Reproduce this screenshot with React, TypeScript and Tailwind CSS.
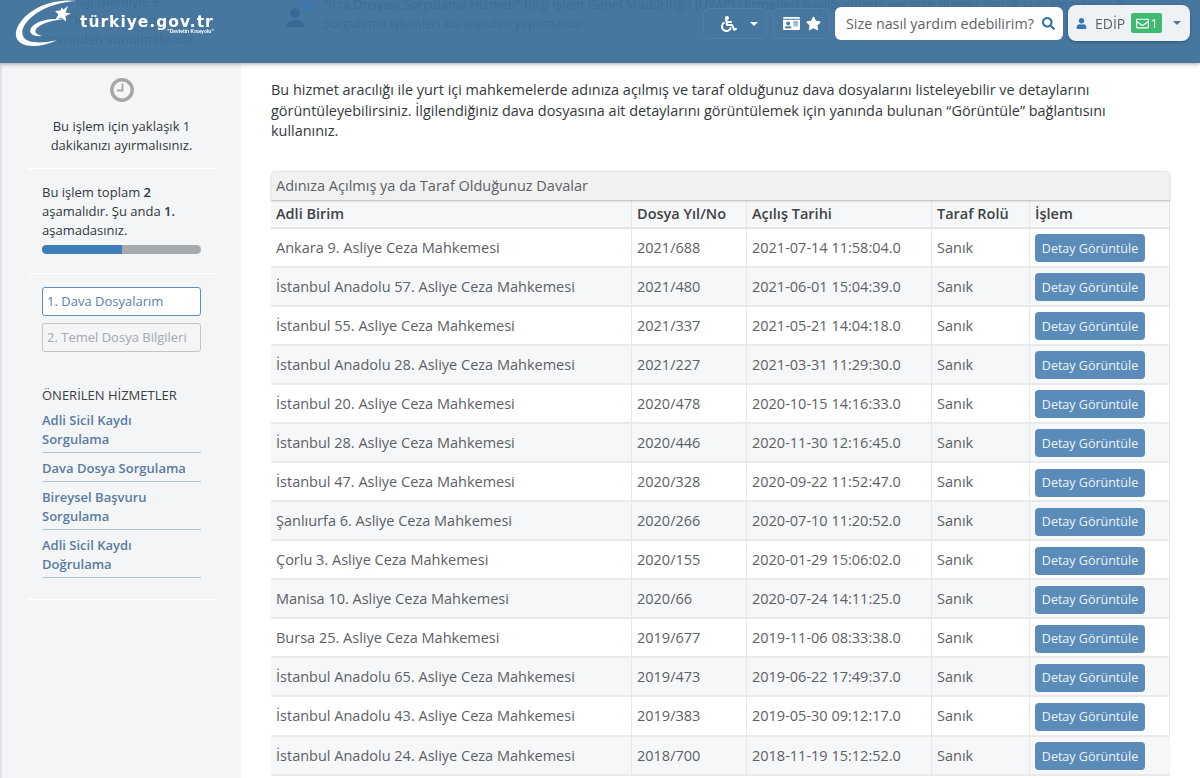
import { FaIdCard, FaRegEnvelope, FaSearch, FaStar, FaUser, FaWheelchair } from "react-icons/fa";

const rows = [
  ["Ankara 9. Asliye Ceza Mahkemesi", "2021/688", "2021-07-14 11:58:04.0"],
  ["İstanbul Anadolu 57. Asliye Ceza Mahkemesi", "2021/480", "2021-06-01 15:04:39.0"],
  ["İstanbul 55. Asliye Ceza Mahkemesi", "2021/337", "2021-05-21 14:04:18.0"],
  ["İstanbul Anadolu 28. Asliye Ceza Mahkemesi", "2021/227", "2021-03-31 11:29:30.0"],
  ["İstanbul 20. Asliye Ceza Mahkemesi", "2020/478", "2020-10-15 14:16:33.0"],
  ["İstanbul 28. Asliye Ceza Mahkemesi", "2020/446", "2020-11-30 12:16:45.0"],
  ["İstanbul 47. Asliye Ceza Mahkemesi", "2020/328", "2020-09-22 11:52:47.0"],
  ["Şanlıurfa 6. Asliye Ceza Mahkemesi", "2020/266", "2020-07-10 11:20:52.0"],
  ["Çorlu 3. Asliye Ceza Mahkemesi", "2020/155", "2020-01-29 15:06:02.0"],
  ["Manisa 10. Asliye Ceza Mahkemesi", "2020/66", "2020-07-24 14:11:25.0"],
  ["Bursa 25. Asliye Ceza Mahkemesi", "2019/677", "2019-11-06 08:33:38.0"],
  ["İstanbul Anadolu 65. Asliye Ceza Mahkemesi", "2019/473", "2019-06-22 17:49:37.0"],
  ["İstanbul Anadolu 43. Asliye Ceza Mahkemesi", "2019/383", "2019-05-30 09:12:17.0"],
  ["İstanbul Anadolu 24. Asliye Ceza Mahkemesi", "2018/700", "2018-11-19 15:12:52.0"],
];

const links = [
  ["Adli Sicil Kaydı", "Sorgulama"],
  ["Dava Dosya Sorgulama"],
  ["Bireysel Başvuru", "Sorgulama"],
  ["Adli Sicil Kaydı", "Doğrulama"],
];

function Logo() {
  return (
    <div className="flex items-start">
      <svg width="65" height="48" viewBox="0 0 65 48" className="shrink-0">
        <path d="M62 1C42-2 14 6 3 26c-6 12 1 20 15 20 8 0 16-2 24-6-8 2-16 3-23 2C8 41 5 34 9 26 18 11 40 2 62 1Z" fill="#fff" />
        <path d="M50 19c-16-1-29 2-34 9-3 5 2 9 11 8-7-2-8-5-5-8 5-5 16-8 28-9Z" fill="#fff" />
        <path d="m53 6-2.500 6.500 5.500 1-5.500 2.500.5 5.500-4.500-4-6 2 3-5-3.500-3.500 5.500-.5 1-3 2 2Z" fill="#fff" />
      </svg>
      <div className="mt-[15px] flex flex-col items-end">
        <span className="font-['DejaVu_Sans'] text-[15.5px] leading-[14px] font-bold tracking-[1px] text-white">türkiye.gov.tr</span>
        <span className="font-['Liberation_Sans'] text-[5px] leading-[5px] font-bold text-white">"Devletin Kısayolu"</span>
      </div>
    </div>
  );
}

function Header() {
  return (
    <header className="fixed top-0 left-0 z-10 flex h-[63px] w-full items-start bg-[#47769f] pl-[15px] shadow-[0_1px_4px_rgba(0,0,0,0.35)]">
      <div className="pointer-events-none absolute top-[-8px] left-[40px] w-[160px] text-center text-[13px] leading-[19px] text-[#3f6d95]">
        İlgi işlemiyle e-<br />Devlet üzerinden<br />üzerinden sunulmaktadır.
      </div>
      <div className="pointer-events-none absolute top-[-5px] left-[323px] w-[800px] text-[12.8px] leading-[19px] whitespace-nowrap text-[#3f6d95]">
        "İcra Dosyası Sorgulama Hizmeti" Bilgi İşlem Genel Müdürlüğü (UYAP) Hizmetleri başlığı altında yer alan hizmet olarak sunulmaktadır. Bu<br />
        Sorgulama işlemleri bu alandan yapılmalıdır.
      </div>
      <svg className="absolute top-0 left-[284px]" width="36" height="30" viewBox="0 0 36 30">
        <circle cx="11" cy="13" r="5" fill="#3a6892" />
        <path d="M2 27c0-5 4-7 9-7s9 2 9 7Z" fill="#3a6892" />
        <circle cx="25" cy="5" r="7" fill="#3f78ac" />
        <path d="M18 10l-2 4 5-2Z" fill="#3f78ac" />
        <path d="M24 1h2v5h-2Zm0 6h2v2h-2Z" fill="#47769f" />
      </svg>
      <div className="relative z-10"><Logo /></div>
      <div className="relative z-10 ml-auto flex items-start pt-[5px] pr-[10px]">
        <div className="mt-[3px] mr-[6px] flex h-[31px] w-[64px] items-center gap-[13px] rounded-md border border-[#4f7ea6] pl-[17px] text-white">
          <FaWheelchair size={16} />
          <div className="h-0 w-0 border-x-[4px] border-t-[4px] border-x-transparent border-t-white" />
        </div>
        <div className="mt-[3px] mr-[5px] flex h-[31px] w-[57px] items-center gap-[6px] rounded-md border border-[#4f7ea6] pl-[9px] text-white">
          <FaIdCard size={17} />
          <FaStar size={15} />
        </div>
        <div className="mt-[2px] mr-[5px] flex h-[33px] w-[228px] items-center justify-between rounded-md bg-white pr-[8px] pl-[11px] text-[14.3px] text-[#5d6368]">
          <span>Size nasıl yardım edebilirim?</span>
          <FaSearch size={13} className="text-[#2f74ad]" />
        </div>
        <div className="flex h-[36px] w-[122px] items-center rounded-lg bg-[#eef2f6] pl-[8px] text-[14px] text-[#5d6368] shadow-[0_1px_3px_rgba(0,0,0,0.3)]">
          <FaUser size={11} className="text-[#3a76ae]" />
          <span className="ml-[8px]">EDİP</span>
          <span className="ml-[6px] flex h-[20px] w-[31px] items-center justify-center gap-[2px] rounded-[2px] bg-[#3dbb70] text-white">
            <FaRegEnvelope size={13} />
            <span className="text-[13px]">1</span>
          </span>
          <div className="ml-[11px] h-0 w-0 border-x-[4px] border-t-[4px] border-x-transparent border-t-[#47769f]" />
        </div>
      </div>
    </header>
  );
}

function Sidebar() {
  return (
    <aside className="ml-[2px] min-h-[778px] w-[239px] shrink-0 bg-[#f3f5f7] pt-[15px] text-[13px] leading-[19px] text-[#33383c]">
      <div className="mx-[26px] flex flex-col items-center border-b border-white pb-[13px] text-center">
        <svg width="24" height="24" viewBox="0 0 24 24" fill="none" stroke="#a4a7aa">
          <circle cx="12" cy="12" r="10.2" strokeWidth="3.4" />
          <path d="M12.500 5.500v7H7" strokeWidth="1.800" />
        </svg>
        <p className="mt-[15px]">Bu işlem için yaklaşık 1<br />dakikanızı ayırmalısınız.</p>
      </div>
      <div className="mx-[26px] border-b border-white px-[14px] pt-[14px] pb-[19px]">
        <p>Bu işlem toplam <b className="font-semibold">2</b><br />aşamalıdır. Şu anda <b className="font-semibold">1.</b><br />aşamadasınız.</p>
        <div className="mt-[5px] flex h-[9px] overflow-hidden rounded-full bg-[#a6a9ac]">
          <div className="w-1/2 bg-[#3f7fb9]" />
        </div>
      </div>
      <div className="mx-[40px] mt-[13px] flex flex-col gap-[7px]">
        <div className="flex h-[29px] items-center rounded-[3px] border border-[#5c8fbd] bg-white pl-[4px] text-[#5a81a8]">1. Dava Dosyalarım</div>
        <div className="flex h-[29px] items-center rounded-[3px] border border-[#c2c5c8] pl-[4px] whitespace-nowrap text-[#a6a9ac]">2. Temel Dosya Bilgileri</div>
      </div>
      <div className="mx-[26px] mt-[34px] border-b border-white px-[14px] pb-[21px]">
        <div className="text-[#3b4044]">ÖNERİLEN HİZMETLER</div>
        {links.map((lines) => (
          <div key={lines.join(" ")} className="border-b border-[#b3c3d4] pt-[6px] pb-[3px] leading-[19px] font-semibold text-[#5a7ba3]">
            {lines.map((line) => (
              <div key={line}>{line}</div>
            ))}
          </div>
        ))}
      </div>
    </aside>
  );
}

function Table() {
  const cell = "border-r border-[#e6e8ea] px-[5px] last:border-r-0";
  return (
    <div className="mt-[29px] w-[899px]">
      <div className="relative z-[1] flex h-[29px] items-center rounded-t-[5px] border border-b-0 border-[#e6e6e6] bg-[#f1f1f1] pl-[4px] text-[#5c6166] shadow-[0_1px_2px_rgba(0,0,0,0.25)]">
        Adınıza Açılmış ya da Taraf Olduğunuz Davalar
      </div>
      <div className="grid grid-cols-[361px_115px_185px_98px_140px] items-stretch text-[#5c6166]">
        {["Adli Birim", "Dosya Yıl/No", "Açılış Tarihi", "Taraf Rolü", "İşlem"].map((h) => (
          <div key={h} className={`flex h-[29px] items-center border-b-2 border-b-[#e3e5e7] bg-[#f6f7f8] font-semibold text-[#3e4347] ${cell}`}>
            {h}
          </div>
        ))}
        {rows.map((row, i) => {
          const bg = i % 2 === 0 ? "bg-white" : "bg-[#f6f7f8]";
          return [...row, "Sanık"].map((text) => (
            <div key={i + text} className={`flex h-[39.08px] items-center border-b-2 border-b-[#e8eaec] ${bg} ${cell}`}>
              {text}
            </div>
          )).concat(
            <div key={i + "btn"} className={`flex h-[39.08px] items-center border-b-2 border-b-[#e8eaec] ${bg} ${cell}`}>
              <button className="mt-[2px] flex h-[28px] w-[110px] items-center justify-center rounded-[4px] bg-[#5b8bb9] text-[12.5px] text-[#eef3f8]">
                Detay Görüntüle
              </button>
            </div>
          );
        })}
      </div>
    </div>
  );
}

export default function App() {
  return (
    <div className="h-[778px] overflow-hidden bg-white font-['Open_Sans',sans-serif] text-[14.5px] leading-[19px]">
      <Header />
      <div className="flex bg-[#dfe3e7] pt-[63px]">
        <Sidebar />
        <main className="flex-1 bg-white pt-[17px] pl-[30px]">
          <p className="w-[860px] text-[14.45px] leading-[20.5px] text-[#33383c]">
            Bu hizmet aracılığı ile yurt içi mahkemelerde adınıza açılmış ve taraf olduğunuz dava dosyalarını listeleyebilir ve detaylarını görüntüleyebilirsiniz. İlgilendiğiniz dava dosyasına ait detaylarını görüntülemek için yanında bulunan “Görüntüle” bağlantısını kullanınız.
          </p>
          <Table />
        </main>
      </div>
    </div>
  );
}
